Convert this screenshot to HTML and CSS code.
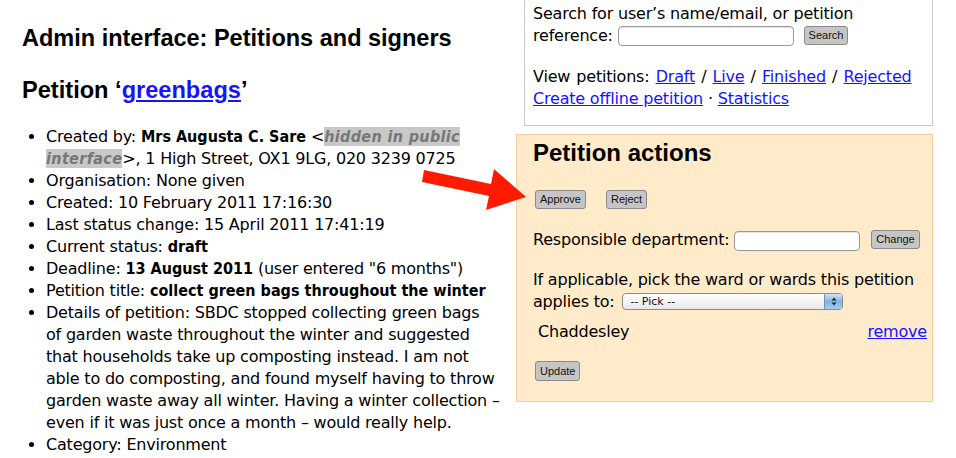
FILE: index.html
```html
<!DOCTYPE html>
<html>
<head>
<meta charset="utf-8">
<title>Admin interface: Petitions and signers</title>
<link rel="stylesheet" href="styles.css">
</head>
<body>
<div class="page">
  <div class="main">
    <h1 class="title">Admin interface: Petitions and signers</h1>
    <h2 class="subtitle">Petition ‘<a href="#">greenbags</a>’</h2>
    <ul class="details">
      <li>Created by: <b>Mrs Augusta C. Sare</b> &lt;<span class="hidden">hidden in public interface</span>&gt;, 1 High Street, OX1 9LG, 020 3239 0725</li>
      <li>Organisation: None given</li>
      <li>Created: 10 February 2011 17:16:30</li>
      <li>Last status change: 15 April 2011 17:41:19</li>
      <li>Current status: <b>draft</b></li>
      <li>Deadline: <b>13 August 2011</b> (user entered "6 months")</li>
      <li>Petition title: <b>collect green bags throughout the winter</b></li>
      <li>Details of petition: SBDC stopped collecting green bags<br>of garden waste throughout the winter and suggested that households take up composting instead. I am not able to do composting, and found myself having to throw garden waste away all winter. Having a winter collection – even if it was just once a month – would really help.</li>
      <li>Category: Environment</li>
    </ul>
  </div>
  <div class="side">
    <div class="searchbox">
      <p class="search-line">Search for user’s name/email, or petition reference: <span class="input search-input"></span> <span class="btn btn-search">Search</span></p>
      <p class="views"><span class="view-list">View petitions: <a href="#">Draft</a> / <a href="#">Live</a> / <a href="#">Finished</a> / <a href="#">Rejected</a></span><br><a href="#">Create offline petition</a> · <a href="#">Statistics</a></p>
    </div>
    <div class="actions">
      <h2 class="actions-title">Petition actions</h2>
      <div class="button-row">
        <span class="btn">Approve</span>
        <span class="btn">Reject</span>
      </div>
      <p class="dept">Responsible department: <span class="input dept-input"></span> <span class="btn btn-change">Change</span></p>
      <p class="wards">If applicable, pick the ward or wards this petition applies to: <span class="select"><span class="select-text">-- Pick --</span><span class="stepper"><svg width="8" height="11" viewBox="0 0 8 11"><path d="M1.5 4.5 L4 1.5 L6.5 4.5 Z M1.5 6.5 L4 9.5 L6.5 6.5 Z" fill="#1b2a3a"/></svg></span></span></p>
      <div class="ward-row">
        <span class="ward-name">Chaddesley</span>
        <a href="#" class="remove">remove</a>
      </div>
      <div class="update-row"><span class="btn btn-update">Update</span></div>
    </div>
  </div>
  <svg class="arrow" width="956" height="458" viewBox="0 0 956 458">
    <polygon points="424,170 491,184 494,169 526,197 486,210 489,196 422,182" fill="#ff1a00"/>
  </svg>
</div>
</body>
</html>
```
FILE: styles.css
```css
html, body {
  margin: 0;
  padding: 0;
  background: #ffffff;
}
body {
  font-family: "DejaVu Sans", Verdana, sans-serif;
  font-size: 16px;
  letter-spacing: -0.2px;
  color: #000;
}
a {
  color: #1414ff;
  text-decoration: underline;
}
b {
  font-family: "DejaVu Sans Condensed", "DejaVu Sans", sans-serif;
  font-stretch: semi-condensed;
  font-weight: bold;
  letter-spacing: 0;
}
.page {
  position: relative;
  display: flex;
  width: 956px;
  height: 458px;
  overflow: hidden;
}
.main {
  width: 494px;
  padding-left: 22px;
  flex: none;
}
.title, .subtitle, .actions-title {
  font-family: "Liberation Sans", Arial, sans-serif;
  font-weight: bold;
  letter-spacing: 0;
}
.title {
  font-size: 23.5px;
  line-height: 28px;
  margin: 24px 0 0 0;
}
.subtitle {
  font-size: 23.6px;
  line-height: 26px;
  margin: 25px 0 0 0;
}
.details {
  margin: 23px 0 0 0;
  padding-left: 24px;
  width: 460px;
  line-height: 22px;
}
.hidden {
  font-family: "DejaVu Sans Condensed", "DejaVu Sans", sans-serif;
  font-stretch: semi-condensed;
  background: #c8c8c8;
  color: #777;
  font-style: italic;
  font-weight: bold;
  letter-spacing: 0.35px;
}
.side {
  width: 417px;
  flex: none;
  display: flex;
  flex-direction: column;
}
.searchbox {
  margin-left: 8px;
  border: 1px solid #c8c8c8;
  border-top: none;
  padding: 3px 8px 15px 8px;
  line-height: 22px;
}
.searchbox p {
  margin: 0;
}
.search-line {
  width: 340px;
}
.views {
  margin-top: 19px !important;
}
.view-list {
  word-spacing: 1.3px;
}
.input {
  display: inline-block;
  vertical-align: middle;
  background: #fff;
  border: 1px solid #9a9a9a;
  border-radius: 4px;
  height: 18px;
  box-shadow: inset 0 1px 1px rgba(0,0,0,0.12);
}
.search-input {
  width: 174px;
  margin-top: -2px;
}
.btn {
  display: inline-block;
  vertical-align: middle;
  font-family: "Liberation Sans", Arial, sans-serif;
  font-size: 11px;
  letter-spacing: 0;
  word-spacing: 0;
  line-height: 17px;
  height: 17px;
  padding: 0 4px;
  border: 1px solid #8a8a8a;
  border-radius: 3px;
  background: #c5c5c5;
  color: #111;
  text-align: center;
}
.btn-search {
  margin-left: 5px;
  margin-top: -2px;
}
.actions {
  margin-top: 8px;
  background: #ffebc9;
  border: 1px solid #f6cf9c;
  padding: 0 5px 18px 16px;
  height: 248px;
}
.actions-title {
  font-size: 24px;
  line-height: 26px;
  margin: 5px 0 0 0;
}
.button-row {
  display: flex;
  gap: 20px;
  margin-top: 24px;
  padding-left: 2px;
}
.dept {
  margin: 20px 0 0 0;
  line-height: 22px;
}
.dept-input {
  width: 124px;
}
.btn-change {
  margin-left: 6px;
  margin-top: -2px;
}
.wards {
  margin: 18px 0 0 0;
  line-height: 22px;
  width: 395px;
}
.select {
  display: inline-flex;
  vertical-align: middle;
  width: 219px;
  height: 15px;
  border: 1px solid #8b8b8b;
  border-radius: 4px;
  background: linear-gradient(#ffffff, #e8e8e8);
  overflow: hidden;
  margin-left: 3px;
  margin-top: -3px;
}
.select-text {
  flex: 1;
  font-size: 11px;
  line-height: 15px;
  letter-spacing: 0;
  padding-left: 7px;
  color: #111;
}
.stepper {
  width: 17px;
  display: flex;
  align-items: center;
  justify-content: center;
  background: linear-gradient(#cfe3f7, #7fb3e6 50%, #a6cdf2);
  border-left: 1px solid #7a8fa8;
}
.ward-row {
  display: flex;
  justify-content: space-between;
  margin-top: 8px;
  padding-left: 5px;
  line-height: 22px;
}
.update-row {
  margin-top: 17px;
  padding-left: 2px;
}
.btn-update {
  height: 18px;
  line-height: 18px;
}
.arrow {
  position: absolute;
  left: 0;
  top: 0;
  pointer-events: none;
}
```
